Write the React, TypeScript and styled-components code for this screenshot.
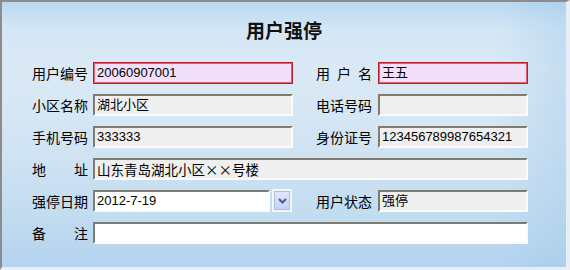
import React from 'react';
import styled, { createGlobalStyle } from 'styled-components';

const Global = createGlobalStyle`
  html, body { margin: 0; padding: 0; }
  body {
    width: 570px;
    height: 270px;
    overflow: hidden;
    font-family: "Noto Sans CJK SC", sans-serif;
  }
`;

const Frame = styled.div`
  box-sizing: border-box;
  width: 570px;
  height: 270px;
  border-style: solid;
  border-width: 2px 4px 3px 2px;
  border-color: #8c8c8c #e6eff8 #e6eff8 #8c8c8c;
  background:
    linear-gradient(90deg, rgba(255,255,255,0) 88%, rgba(160,200,232,0.35) 99%),
    linear-gradient(180deg, #b9d8f1 0%, #d3e6f5 10%, #dbe9f5 25%, #d1e4f4 55%, #c2dcf0 80%, #b4d3ee 100%);
  display: flex;
  flex-direction: column;
`;

const Title = styled.h1`
  margin: 16px 0 0 0;
  height: 24px;
  line-height: 24px;
  font-size: 19px;
  font-weight: bold;
  text-align: center;
  color: #111;
`;

const Form = styled.div`
  margin: 20px 0 0 30px;
  display: grid;
  grid-template-columns: 61px 223px 62px 150px;
  grid-auto-rows: 22px;
  row-gap: 10px;
  align-items: center;
`;

const LabelBox = styled.div`
  width: 56px;
  display: flex;
  justify-content: space-between;
  font-size: 14px;
  line-height: 22px;
  color: #000;
`;

const Label = ({ text }: { text: string }) => (
  <LabelBox>
    {text.split('').map((c, i) => (
      <span key={i}>{c}</span>
    ))}
  </LabelBox>
);

type Tone = 'key' | 'read' | 'edit';

const Field = styled.div<{ $tone: Tone; $w?: string; $span?: boolean; $full?: boolean }>`
  box-sizing: border-box;
  width: ${(p) => p.$w ?? '100%'};
  height: 22px;
  ${(p) => (p.$span ? 'grid-column: 2 / 5;' : '')}
  padding: 0 2px;
  font-family: ${(p) =>
    p.$full ? '"Noto Sans CJK SC", sans-serif' : '"Liberation Sans", "Noto Sans CJK SC", sans-serif'};
  ${(p) => (p.$full ? 'font-feature-settings: "fwid" 1; font-size: 13.5px;' : 'font-size: 13px;')}
  line-height: 18px;
  color: #000;
  white-space: nowrap;
  overflow: hidden;
  ${(p) =>
    p.$tone === 'key'
      ? `
    border: 1px solid #b3202c;
    box-shadow: inset 0 0 0 1px #e0606e;
    background: #f2e0fb;
    line-height: 20px;
    padding: 0 3px;
  `
      : `
    border: 2px solid;
    border-color: #7f7b70 #fbfbfb #fbfbfb #7f7b70;
    background: ${p.$tone === 'read' ? '#efefef' : '#ffffff'};
  `}
`;

const DateBox = styled.div`
  width: 199px;
  height: 22px;
  display: flex;
  gap: 2px;
`;

const DropButton = styled.div`
  box-sizing: border-box;
  width: 20px;
  height: 23px;
  margin-top: -1px;
  border: 2px solid #f3f6fb;
  display: flex;
`;

const DropInner = styled.div`
  flex: 1;
  border: 1px solid #a9bde6;
  background: linear-gradient(180deg, #dfe8fc 0%, #c3d4f6 100%);
  display: flex;
  align-items: center;
  justify-content: center;
`;

const Chevron = () => (
  <svg width="9" height="6" viewBox="0 0 9 6">
    <path d="M1 1 L4.5 4.5 L8 1" fill="none" stroke="#4a5f88" strokeWidth="2" />
  </svg>
);

export default function App() {
  return (
    <>
      <Global />
      <Frame>
        <Title>用户强停</Title>
        <Form>
          <Label text="用户编号" />
          <Field $tone="key" $w="200px">20060907001</Field>
          <Label text="用户名" />
          <Field $tone="key">王五</Field>

          <Label text="小区名称" />
          <Field $tone="read" $w="200px">湖北小区</Field>
          <Label text="电话号码" />
          <Field $tone="read"></Field>

          <Label text="手机号码" />
          <Field $tone="read" $w="200px">333333</Field>
          <Label text="身份证号" />
          <Field $tone="read">123456789987654321</Field>

          <Label text="地址" />
          <Field $tone="read" $span $full>山东青岛湖北小区××号楼</Field>

          <Label text="强停日期" />
          <DateBox>
            <Field $tone="edit" $w="178px">2012-7-19</Field>
            <DropButton>
              <DropInner>
                <Chevron />
              </DropInner>
            </DropButton>
          </DateBox>
          <Label text="用户状态" />
          <Field $tone="read">强停</Field>

          <Label text="备注" />
          <Field $tone="edit" $span></Field>
        </Form>
      </Frame>
    </>
  );
}
